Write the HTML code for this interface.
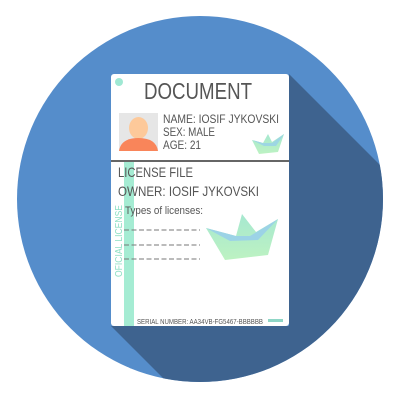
<!DOCTYPE html><html><head><style>
body{margin:0;width:400px;height:400px;background:#fff;overflow:hidden;position:relative;font-family:"Liberation Sans",sans-serif}
svg text{font-family:"Liberation Sans",sans-serif;fill:#555}
</style></head><body>
<svg width="400" height="400" style="position:absolute;left:0;top:0">
<defs><clipPath id="c"><circle cx="200" cy="199" r="183"/></clipPath>
<linearGradient id="g" x1="0" y1="0" x2="0" y2="1"><stop offset="0" stop-color="#a6e8d0"/><stop offset="1" stop-color="#bdf2c2"/></linearGradient></defs>
<circle cx="200" cy="199" r="183" fill="#558dcb"/>
<polygon clip-path="url(#c)" points="289,74 289,326 111,326 400,615 600,400 600,385" fill="#3e638f"/>
<rect x="111" y="74" width="178" height="252" rx="3" fill="#fff"/>
<circle cx="119" cy="82" r="4" fill="#9fe8d3"/>
<rect x="119" y="113" width="39" height="38" fill="#e6e6e6"/>
<ellipse cx="138.5" cy="128" rx="9.5" ry="11" fill="#fdc99a"/>
<path d="M119,151 Q121,138 138.5,138 Q156,138 158,151Z" fill="#f9855a"/>
<polygon points="252,140 263,143 268,134 272,142 284,134 278,152 259,154" fill="url(#g)"/>
<polygon points="252,140 263,143 272,143 284,134 276,146 264,146" fill="#9dd6e3"/>
<rect x="111" y="160" width="178" height="2" fill="#666"/>
<rect x="124" y="162" width="10" height="164" fill="#a5ecd3"/>
<polygon points="206,228 236,236 242,214 256,232 278,219 268,255 225,260" fill="url(#g)"/>
<polygon points="206,228 236,236 250,236 278,219 258,240 230,241" fill="#9cd3e6"/>
<g stroke="#777" stroke-width="1" stroke-dasharray="5,2.5"><line x1="124" y1="230" x2="200" y2="230"/><line x1="124" y1="245" x2="200" y2="245"/><line x1="124" y1="259" x2="200" y2="259"/></g>
<rect x="268" y="319" width="15" height="3" fill="#8fd6c6"/>
<text x="144" y="99" font-size="23" textLength="108" lengthAdjust="spacingAndGlyphs">DOCUMENT</text>
<text x="163" y="123" font-size="12" textLength="116" lengthAdjust="spacingAndGlyphs">NAME: IOSIF JYKOVSKI</text>
<text x="163" y="136" font-size="12" textLength="52" lengthAdjust="spacingAndGlyphs">SEX: MALE</text>
<text x="163" y="149" font-size="12" textLength="38" lengthAdjust="spacingAndGlyphs">AGE: 21</text>
<text x="118" y="177" font-size="14" textLength="75" lengthAdjust="spacingAndGlyphs">LICENSE FILE</text>
<text x="118" y="196" font-size="14" textLength="141" lengthAdjust="spacingAndGlyphs">OWNER: IOSIF JYKOVSKI</text>
<text x="125" y="214" font-size="11" textLength="78" lengthAdjust="spacingAndGlyphs">Types of licenses:</text>
<text x="137" y="324" font-size="7" textLength="126" lengthAdjust="spacingAndGlyphs">SERIAL NUMBER: AA34VB-FG5467-BBBBBB</text>
<text transform="translate(122,277) rotate(-90)" font-size="10" style="fill:#8fe0c4" textLength="72" lengthAdjust="spacingAndGlyphs">OFICIAL LICENSE</text>
</svg>
</body></html>
